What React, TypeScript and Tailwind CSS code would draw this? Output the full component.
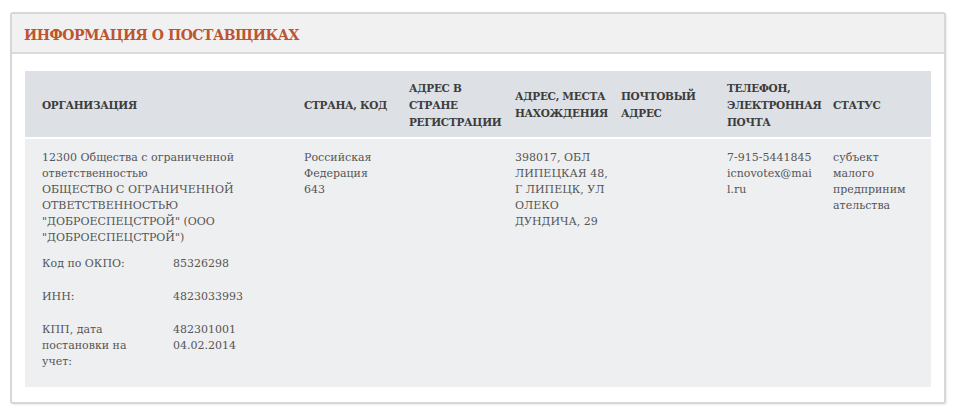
const headers: string[][] = [
  ['ОРГАНИЗАЦИЯ'],
  ['СТРАНА, КОД'],
  ['АДРЕС В', 'СТРАНЕ', 'РЕГИСТРАЦИИ'],
  ['АДРЕС, МЕСТА', 'НАХОЖДЕНИЯ'],
  ['ПОЧТОВЫЙ', 'АДРЕС'],
  ['ТЕЛЕФОН,', 'ЭЛЕКТРОННАЯ', 'ПОЧТА'],
  ['СТАТУС'],
];

const orgLines = [
  '12300 Общества с ограниченной',
  'ответственностью',
  'ОБЩЕСТВО С ОГРАНИЧЕННОЙ',
  'ОТВЕТСТВЕННОСТЬЮ',
  '"ДОБРОЕСПЕЦСТРОЙ" (ООО',
  '"ДОБРОЕСПЕЦСТРОЙ")',
];

const codes = [
  { label: ['Код по ОКПО:'], value: ['85326298'] },
  { label: ['ИНН:'], value: ['4823033993'] },
  { label: ['КПП, дата', 'постановки на', 'учет:'], value: ['482301001', '04.02.2014'] },
];

const cells: string[][] = [
  ['Российская', 'Федерация', '643'],
  [],
  ['398017, ОБЛ', 'ЛИПЕЦКАЯ 48,', 'Г ЛИПЕЦК, УЛ', 'ОЛЕКО', 'ДУНДИЧА, 29'],
  [],
  ['7-915-5441845', 'icnovotex@mai', 'l.ru'],
  ['субъект', 'малого', 'предприним', 'ательства'],
];

const Lines = ({ lines }: { lines: string[] }) => (
  <>
    {lines.map((l, i) => (
      <div key={i} className="whitespace-nowrap">
        {l}
      </div>
    ))}
  </>
);

const cols = 'grid grid-cols-[263px_105px_106px_106px_106px_106px_114px]';

export default function App() {
  return (
    <div className="w-[954px] h-[416px] bg-white pt-3 pl-[10px] pr-[8px] font-['DejaVu_Serif',serif]">
      <div className="border-2 border-[#d7d7d7] rounded-[3px] h-[392px] shadow-[1px_1px_2px_rgba(0,0,0,0.08)]">
        <div className="h-[40px] bg-[#f1f1f1] border-b-2 border-[#dadada] flex items-center px-3 pt-1">
          <h2 className="text-[14px] font-bold text-[#bd5530] tracking-[-0.5px]">
            ИНФОРМАЦИЯ О ПОСТАВЩИКАХ
          </h2>
        </div>

        <div className="px-[13px] pt-[17px]">
          <div className={`${cols} h-[66px] pt-[2px] bg-[#dde1e6] text-[10.5px] font-bold leading-[17px] tracking-[-0.3px] text-[#3d3d3d]`}>
            {headers.map((h, i) => (
              <div key={i} className={`flex flex-col justify-center ${i === 0 ? 'pl-[17px]' : 'pl-4'}`}>
                <Lines lines={h} />
              </div>
            ))}
          </div>

          <div className={`${cols} mt-[2px] h-[248px] bg-[#eeeff1] text-[11px] leading-[16px] text-[#555]`}>
            <div className="pl-[17px] pt-[11px]">
              <Lines lines={orgLines} />
              <div className="mt-[10px] flex flex-col gap-[17px]">
                {codes.map((c, i) => (
                  <div key={i} className="flex">
                    <div className="w-[131px]">
                      <Lines lines={c.label} />
                    </div>
                    <div>
                      <Lines lines={c.value} />
                    </div>
                  </div>
                ))}
              </div>
            </div>
            {cells.map((c, i) => (
              <div key={i} className="pl-4 pt-[11px]">
                <Lines lines={c} />
              </div>
            ))}
          </div>
        </div>
      </div>
    </div>
  );
}
